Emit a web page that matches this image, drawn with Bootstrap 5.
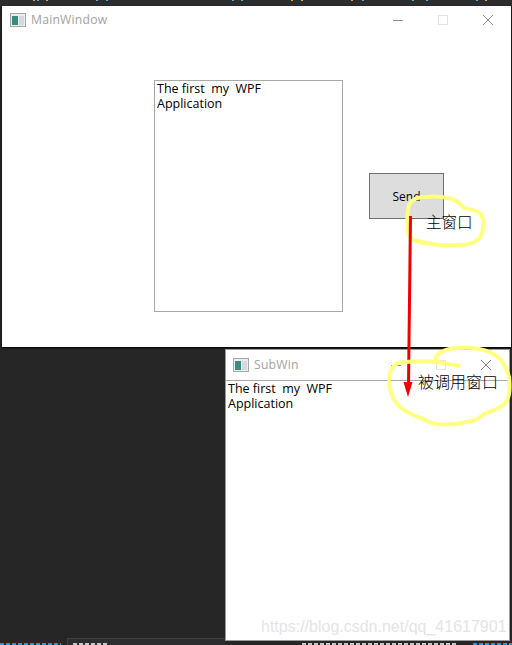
<!DOCTYPE html>
<html lang="en">
<head>
  <meta charset="UTF-8" />
  <title>WPF windows</title>
  <link href="https://cdn.jsdelivr.net/npm/bootstrap@5.3.0/dist/css/bootstrap.min.css" rel="stylesheet" />
  <style>
    html, body { height: 100%; margin: 0; }
    body { background: #262626; overflow: hidden; position: relative; font-family: "Open Sans", "Noto Sans CJK SC", sans-serif; }
    .win { position: absolute; background: #fff; display: flex; flex-direction: column; }
    .win-main { left: 2px; top: 6px; width: 509px; height: 341px; box-shadow: 0 1px 2px #000; }
    .win-sub { left: 225px; top: 349px; width: 285px; height: 292px; border: 1px solid #9a9a9a; }
    .title-bar { flex: none; font-size: 12.2px; color: #a3a3a3; letter-spacing: .2px; }
    .win-main .title-bar { height: 28px; padding-left: 8px; }
    .win-sub .title-bar { height: 31px; border-bottom: 1px solid #a8a8a8; padding-left: 7px; }
    .title-bar span { margin-left: 1px; }
    .win-icon { width: 16px; height: 14px; }
    .caption-btns { position: absolute; display: flex; }
    .win-main .caption-btns { left: 390px; top: 8px; gap: 33px; }
    .win-sub .caption-btns { left: 164px; top: 9px; gap: 33px; }
    .body-text { font-size: 12.5px; line-height: 15px; color: #000; white-space: pre; }
    .textbox { position: absolute; left: 152px; top: 74px; width: 189px; height: 232px; border: 1px solid #a9a9a9; padding: 0 2px; }
    .send-btn { position: absolute; left: 367px; top: 167px; width: 75px; height: 46px; background: #dddddd; border: 1px solid #707070; border-radius: 0; font-size: 12px; padding: 2px 0 0; color: #000; }
    .sub-body { padding: 0 2px; }
    .marks { position: absolute; left: 0; top: 0; pointer-events: none; }
    .note { position: absolute; line-height: 20px; color: #000; font-family: "Noto Sans CJK SC", sans-serif; font-weight: 300; }
    .note-main { left: 426px; top: 211px; font-size: 15.5px; }
    .note-sub { left: 418px; top: 371px; font-size: 16px; }
    .watermark { position: absolute; left: 261px; top: 617px; font-family: "Liberation Sans", sans-serif; font-size: 16px; line-height: 20px; color: #e4e4e4; }
    .strip-top { position: absolute; left: 0; top: 0; width: 512px; height: 6px; background: #2d2d30; }
    .tick { position: absolute; top: 0; width: 2px; height: 1px; }
    .tick-o { background: #d8a25c; }
    .tick-b { background: #5aa6e0; }
    .tab-edge { position: absolute; left: 67px; top: 638px; width: 158px; height: 7px; background: #2d2d30; border-top: 1px solid #3f3f46; border-left: 1px solid #3f3f46; }
    .frag { position: absolute; top: 643px; height: 2px; background: repeating-linear-gradient(90deg, currentColor 0 4px, transparent 4px 6px); }
    .frag-blue { color: #1e9be8; }
    .frag-light { color: #c8c8c8; }
  </style>
</head>
<body>
  <div class="strip-top"></div>
  <div class="tick tick-o" style="left:33px"></div>
  <div class="tick tick-b" style="left:37px"></div>
  <div class="tick tick-o" style="left:46px"></div>
  <div class="tick tick-b" style="left:96px"></div>
  <div class="tick tick-b" style="left:106px"></div>
  <div class="tick tick-b" style="left:232px"></div>
  <div class="tick tick-b" style="left:241px"></div>
  <div class="tick tick-o" style="left:291px"></div>
  <div class="tick tick-o" style="left:301px"></div>
  <div class="tick tick-o" style="left:351px"></div>
  <div class="tick tick-b" style="left:362px"></div>
  <div class="tick tick-b" style="left:412px"></div>
  <div class="tick tick-b" style="left:426px"></div>
  <div class="tick tick-b" style="left:476px"></div>
  <div class="tick tick-o" style="left:485px"></div>
  <div class="tab-edge"></div>
  <div class="frag frag-blue" style="left:0;width:61px"></div>
  <div class="frag frag-light" style="left:73px;width:36px"></div>
  <div class="frag frag-light" style="left:302px;width:155px"></div>
  <div class="frag frag-blue" style="left:473px;width:39px"></div>

  <!-- main window -->
  <div class="win win-main">
    <div class="title-bar d-flex align-items-center gap-1">
      <svg class="win-icon" viewBox="0 0 16 14"><rect x=".5" y=".5" width="15" height="13" fill="#e8eef0" stroke="#a8a8a8"/><rect x="2" y="3" width="6" height="9" fill="#3d8a80"/><rect x="9" y="3" width="5" height="9" fill="#d5d9dc"/></svg>
      <span>MainWindow</span>
    </div>
    <div class="caption-btns">
      <svg width="12" height="12" viewBox="0 0 12 12"><path d="M1 6.5H11" stroke="#8f8f8f" fill="none"/></svg>
      <svg width="12" height="12" viewBox="0 0 12 12"><rect x="1.5" y="1.5" width="9" height="9" fill="none" stroke="#e2e2e2"/></svg>
      <svg width="12" height="12" viewBox="0 0 12 12"><path d="M1 1L11 11M11 1L1 11" stroke="#8a8a8a" fill="none"/></svg>
    </div>
    <div class="textbox body-text">The first  my  WPF
Application</div>
    <button class="btn send-btn" type="button">Send</button>
  </div>

  <!-- sub window -->
  <div class="win win-sub">
    <div class="title-bar d-flex align-items-center gap-1">
      <svg class="win-icon" viewBox="0 0 16 14"><rect x=".5" y=".5" width="15" height="13" fill="#e8eef0" stroke="#a8a8a8"/><rect x="2" y="3" width="6" height="9" fill="#3d8a80"/><rect x="9" y="3" width="5" height="9" fill="#d5d9dc"/></svg>
      <span>SubWin</span>
    </div>
    <div class="caption-btns">
      <svg width="12" height="12" viewBox="0 0 12 12"><path d="M1 6.5H11" stroke="#8f8f8f" fill="none"/></svg>
      <svg width="12" height="12" viewBox="0 0 12 12"><rect x="1.5" y="1.5" width="9" height="9" fill="none" stroke="#e2e2e2"/></svg>
      <svg width="12" height="12" viewBox="0 0 12 12"><path d="M1 1L11 11M11 1L1 11" stroke="#8a8a8a" fill="none"/></svg>
    </div>
    <div class="sub-body body-text">The first  my  WPF
Application</div>
  </div>

  <!-- annotations drawn on top of the screenshot -->
  <svg class="marks" width="512" height="645" viewBox="0 0 512 645">
    <path d="M409 205C412 199 418 197 425 197C433 196 445 197 452 199C458 201 461 204 464 208C470 209 477 210 481 214C484 219 484 228 481 236C477 243 468 245 458 245C445 246 428 244 417 241C412 240 409 238 408 232C407 223 407 213 409 205Z" fill="none" stroke="#ffff80" stroke-width="4" stroke-linejoin="round"/>
    <path d="M410.500 216L408.500 385" fill="none" stroke="#f00000" stroke-width="3"/>
    <path d="M403.500 382L412.500 382L408 397Z" fill="#f00000"/>
    <path d="M459 366C452 364 446 364 442 363C437 362 434 359 436 356C441 351 449 348 458 348C470 347 483 349 492 353C500 357 506 366 509 377C510 386 510 395 507 400C504 407 495 410 486 413C480 416 479 420 472 421C460 424 446 425 435 424C428 422 424 419 418 417C410 414 403 411 397 404C392 397 389 388 389 380C389 373 392 366 398 363C410 361 425 361 438 362" fill="none" stroke="#ffff80" stroke-width="4" stroke-linecap="round"/>
  </svg>
  <div class="note note-main">主窗口</div>
  <div class="note note-sub">被调用窗口</div>
  <div class="watermark">https://blog.csdn.net/qq_41617901</div>

  <script src="https://cdn.jsdelivr.net/npm/bootstrap@5.3.0/dist/js/bootstrap.bundle.min.js"></script>
</body>
</html>
